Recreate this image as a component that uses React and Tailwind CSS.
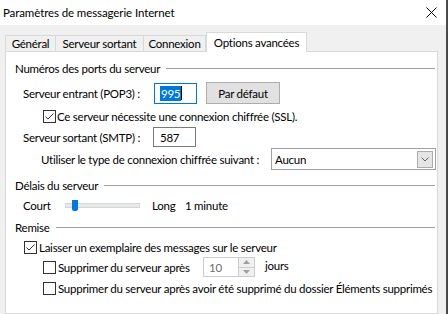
import React from "react";

function CheckBox({ checked }) {
  return (
    <div className="w-[13px] h-[13px] border border-[#333333] bg-white flex items-center justify-center shrink-0">
      {checked && (
        <svg width="11" height="11" viewBox="0 0 11 11">
          <path d="M1.5 5.5 L4 8 L9.5 2.5" fill="none" stroke="#333333" strokeWidth="1" />
        </svg>
      )}
    </div>
  );
}

function GroupHeader({ title, className }) {
  return (
    <div className={"flex items-center h-[16px] pl-[9px] pr-[2px] " + className}>
      <span>{title}</span>
      <div className="flex-1 h-px bg-[#a0a0a0] ml-[6px]" />
    </div>
  );
}

function App() {
  const tab = "h-[16px] border-t border-l border-r border-[#d9d9d9] bg-[#f0f0f0] flex items-center justify-center shrink-0";

  return (
    <div
      className="w-[448px] h-[314px] bg-[#f0f0f0] flex overflow-hidden text-[11.5px] tracking-[-0.25px] leading-[15px] text-black whitespace-nowrap"
      style={{ fontFamily: 'Lato, sans-serif' }}
    >
      <div className="w-[446px] flex flex-col">
        {/* title bar */}
        <div className="h-[25px] bg-white flex items-center justify-between pl-[3px] pr-[9px] shrink-0">
          <span className="tracking-[-0.1px]">Paramètres de messagerie Internet</span>
          <svg width="11" height="11" viewBox="0 0 11 11">
            <path d="M0.5 0.5 L10.5 10.5 M10.5 0.5 L0.5 10.5" stroke="#000" strokeWidth="1" />
          </svg>
        </div>

        {/* tabs */}
        <div className="flex items-end h-[19px] mt-[7px] pl-[5px] shrink-0">
          <div className={tab + " w-[51px]"}>Général</div>
          <div className={tab + " w-[89px] -ml-px"}>Serveur sortant</div>
          <div className={tab + " w-[63px] -ml-px"}>Connexion</div>
          <div className="relative z-10 h-[20px] w-[101px] -mb-px border-t border-l border-r border-[#d9d9d9] bg-white flex items-center justify-center pb-[1px] shrink-0">
            Options avancées
          </div>
        </div>

        {/* panel */}
        <div className="ml-[5px] w-[433px] flex-1 bg-white border border-[#d9d9d9] flex flex-col">
          <GroupHeader title="Numéros des ports du serveur" className="mt-[8px]" />

          <div className="flex items-center h-[22px] mt-[6px] pl-[17px]">
            <div className="w-[131px] shrink-0">Serveur entrant (POP3) :</div>
            <div className="w-[43px] h-[21px] border border-[#0078d7] bg-white flex items-center pl-[5px] shrink-0">
              <span className="bg-[#0078d7] text-white leading-[15px] px-[1px]">995</span>
              <div className="w-px h-[14px] bg-black" />
            </div>
            <div className="ml-[9px] w-[74px] h-[22px] bg-[#e1e1e1] border border-[#adadad] flex items-center justify-center shrink-0">
              Par défaut
            </div>
          </div>

          <div className="flex items-center h-[15px] mt-[5px] pl-[37px]">
            <CheckBox checked />
            <span className="ml-[1px]">Ce serveur nécessite une connexion chiffrée (SSL).</span>
          </div>

          <div className="flex items-center h-[20px] mt-[3px] pl-[17px]">
            <div className="w-[130px] shrink-0">Serveur sortant (SMTP) :</div>
            <div className="w-[43px] h-[20px] border border-[#7a7a7a] bg-white flex items-center pl-[6px] shrink-0">
              587
            </div>
          </div>

          <div className="flex items-center h-[22px] mt-[1px] pl-[35px]">
            <div className="w-[230px] shrink-0">Utiliser le type de connexion chiffrée suivant :</div>
            <div className="w-[165px] h-[22px] border border-[#a0a0a0] bg-white flex items-center justify-between pl-[3px] pr-[2px] shrink-0">
              <span>Aucun</span>
              <div className="w-[16px] h-[17px] bg-[#e5e5e5] border border-[#acacac] flex items-center justify-center">
                <svg width="8" height="5" viewBox="0 0 8 5">
                  <path d="M0.5 0.5 L4 4 L7.5 0.5" fill="none" stroke="#606060" strokeWidth="1" />
                </svg>
              </div>
            </div>
          </div>

          <GroupHeader title="Délais du serveur" className="mt-[7px]" />

          <div className="flex items-center h-[16px] mt-[4px] pl-[17px]">
            <div className="w-[42px] shrink-0">Court</div>
            <div className="relative w-[75px] h-[5px] bg-[#e7eaea] border border-[#d6d6d6] shrink-0">
              <div className="absolute left-[6px] -top-[4px] w-[6px] h-[11px] bg-[#0078d7] rounded-b-[2px]" />
            </div>
            <div className="ml-[12px] w-[33px] shrink-0">Long</div>
            <div>1 minute</div>
          </div>

          <GroupHeader title="Remise" className="mt-[6px]" />

          <div className="flex items-center h-[14px] mt-[5px] pl-[18px]">
            <CheckBox checked />
            <span className="ml-[2px]">Laisser un exemplaire des messages sur le serveur</span>
          </div>

          <div className="flex items-center h-[20px] mt-[3px] pl-[37px]">
            <CheckBox />
            <div className="ml-[2px] w-[145px] shrink-0">Supprimer du serveur après</div>
            <div className="w-[52px] h-[20px] border border-[#cccccc] bg-white flex items-center justify-between pl-[5px] shrink-0">
              <span className="text-[#6d6d6d]">10</span>
              <div className="w-[16px] h-[18px] flex flex-col border-l border-[#cccccc]">
                <div className="flex-1 bg-[#f0f0f0] border-b border-[#cccccc] flex items-center justify-center">
                  <svg width="7" height="4" viewBox="0 0 7 4">
                    <path d="M0 4 L3.5 0 L7 4 Z" fill="#a0a0a0" />
                  </svg>
                </div>
                <div className="flex-1 bg-[#f0f0f0] flex items-center justify-center">
                  <svg width="7" height="4" viewBox="0 0 7 4">
                    <path d="M0 0 L3.5 4 L7 0 Z" fill="#a0a0a0" />
                  </svg>
                </div>
              </div>
            </div>
            <div className="ml-[10px] -mt-[3px]">jours</div>
          </div>

          <div className="flex items-center h-[14px] mt-[4px] pl-[37px]">
            <CheckBox />
            <span className="ml-[2px]">Supprimer du serveur après avoir été supprimé du dossier Éléments supprimés</span>
          </div>
        </div>
      </div>
      <div className="w-[2px] bg-[#4a4a4a] shrink-0" />
    </div>
  );
}

export default App;
